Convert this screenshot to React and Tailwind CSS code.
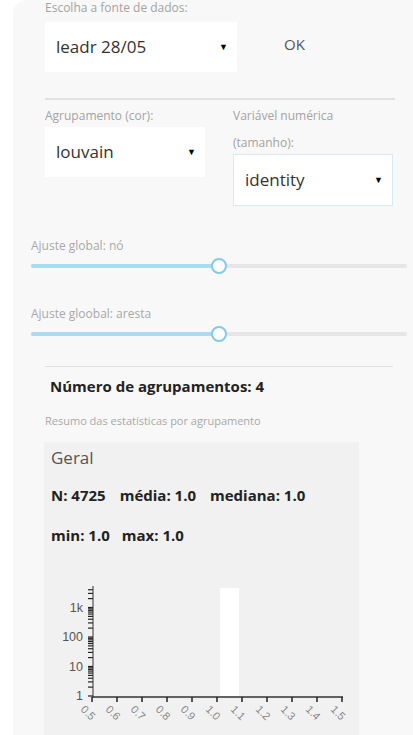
import React from "react";

const font = { fontFamily: '"Open Sans", "Liberation Sans", sans-serif' };

function Select({ value, className = "" }) {
  return (
    <div className={`flex h-[50px] items-center justify-between bg-white pl-[11px] pr-[9px] text-[17px] text-[#333] ${className}`}>
      <span>{value}</span>
      <span className="text-[9px] text-black">▼</span>
    </div>
  );
}

function Slider({ label, pct, className = "" }) {
  return (
    <div className={`ml-[18px] w-[376px] ${className}`}>
      <div className="text-[12px] leading-[16px] text-[#a8a8a8]">{label}</div>
      <div className="relative mt-[10px] h-[4px] rounded-full bg-[#e6e6e6]">
        <div className="h-full rounded-full bg-[#a9dcf1]" style={{ width: `${pct}%` }} />
        <div
          className="absolute top-1/2 h-[16px] w-[16px] -translate-x-1/2 -translate-y-1/2 rounded-full border-[2.5px] border-[#86c9e6] bg-white"
          style={{ left: `${pct}%` }}
        />
      </div>
    </div>
  );
}

function Histogram() {
  const base = 124;
  const dec = 29.5;
  const yOf = (v) => base - Math.log10(v) * dec;
  const ticks = [];
  for (let d = 0; d < 4; d++) {
    for (let m = 1; m < 10; m++) {
      const v = m * Math.pow(10, d);
      if (v <= 4725) ticks.push(v);
    }
  }
  const xs = ["0.5", "0.6", "0.7", "0.8", "0.9", "1.0", "1.1", "1.2", "1.3", "1.4", "1.5"];
  return (
    <svg width="315" height="165" className="block" style={{ fontFamily: '"Liberation Sans", Arial, sans-serif' }}>
      <rect x="176" y="16" width="19" height="108" fill="#fff" />
      {ticks.map((v) => (
        <line key={v} x1="44" x2="49" y1={yOf(v)} y2={yOf(v)} stroke="#222" strokeWidth="1.2" />
      ))}
      <line x1="49" x2="49" y1="14" y2="125" stroke="#333" strokeWidth="1" />
      {[
        ["1", 1],
        ["10", 10],
        ["100", 100],
        ["1k", 1000],
      ].map(([t, v]) => (
        <text key={t} x="39" y={yOf(v)} dy="4" textAnchor="end" fontSize="12.5" fill="#555">
          {t}
        </text>
      ))}
      <line x1="48" x2="299" y1="125" y2="125" stroke="#333" strokeWidth="1.5" />
      {xs.map((t, i) => {
        const tx = 48 + i * 25;
        return (
          <g key={t}>
            <line x1={tx} x2={tx} y1="125" y2="130" stroke="#222" strokeWidth="1.5" />
            <text
              x={tx - 4}
              y="141"
              dy="3.5"
              textAnchor="middle"
              fontSize="11"
              fill="#888"
              transform={`rotate(45 ${tx - 4} 141)`}
            >
              {t}
            </text>
          </g>
        );
      })}
    </svg>
  );
}

export default function App() {
  return (
    <div className="h-[735px] w-[413px] overflow-hidden bg-white" style={font}>
      <div className="ml-[13px] h-[760px] rounded-tl-[14px] bg-[#f8f8f8]">
        <div className="ml-[32px]">
          <div className="text-[12px] leading-[16px] text-[#a3a3a3]">Escolha a fonte de dados:</div>
          <div className="mt-[6px] flex items-start">
            <Select value="leadr 28/05" className="w-[192px]" />
            <div className="ml-[47px] mt-[12px] text-[15px] leading-[20px] text-[#555]">OK</div>
          </div>
          <div className="mt-[26px] h-[2px] w-[350px] bg-[#e2e2e2]" />

          <div className="mt-[2px] flex gap-[28px]">
            <div className="w-[160px]">
              <div className="text-[12px] leading-[27px] text-[#a3a3a3]">Agrupamento (cor):</div>
              <Select value="louvain" className="-mt-[2px]" />
            </div>
            <div className="w-[160px]">
              <div className="text-[12px] leading-[27px] text-[#a3a3a3]">
                Variável numérica
                <br />
                (tamanho):
              </div>
              <Select value="identity" className="-mt-[2px] h-[52px] border border-[#d3ecec] pl-[11px]" />
            </div>
          </div>
        </div>

        <Slider label="Ajuste global: nó" pct={50} className="mt-[32px]" />
        <Slider label="Ajuste gloobal: aresta" pct={50} className="mt-[38px]" />

        <div className="ml-[32px] mt-[30px] h-px w-[348px] bg-[#e0e0e0]" />

        <div className="ml-[37px] mt-[9px] text-[15px] font-bold leading-[20px] text-[#222]">
          Número de agrupamentos: 4
        </div>
        <div className="ml-[32px] mt-[18px] text-[11px] leading-[14px] text-[#a8a8a8]">
          Resumo das estatísticas por agrupamento
        </div>

        <div className="ml-[31px] mt-[14px] h-[320px] w-[315px] bg-[#f1f1f1]">
          <div className="pl-[7px] pt-[5px]">
            <div className="text-[17px] leading-[22px] text-[#555]">Geral</div>
            <div className="mt-[16px] flex gap-[14px] text-[15px] font-bold leading-[20px] text-[#222]">
              <span>N: 4725</span>
              <span>média: 1.0</span>
              <span>mediana: 1.0</span>
            </div>
            <div className="mt-[20px] flex gap-[12px] text-[15px] font-bold leading-[20px] text-[#222]">
              <span>min: 1.0</span>
              <span>max: 1.0</span>
            </div>
          </div>
          <div className="mt-[27px]">
            <Histogram />
          </div>
        </div>
      </div>
    </div>
  );
}
